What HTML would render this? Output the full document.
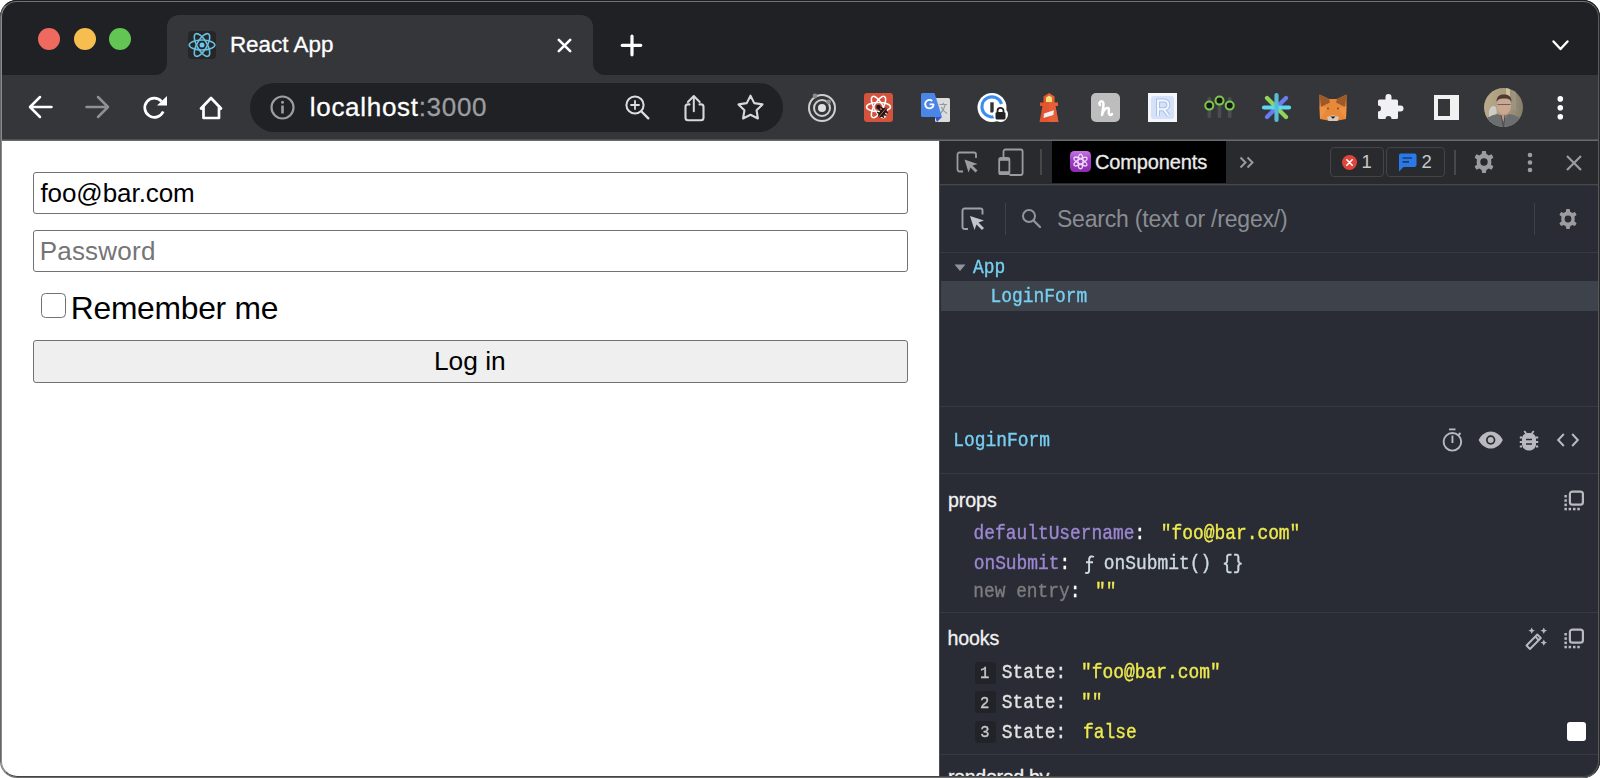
<!DOCTYPE html>
<html><head><meta charset="utf-8">
<style>
*{margin:0;padding:0;box-sizing:border-box}
html,body{width:1600px;height:778px;overflow:hidden;background:#fff;font-family:"Liberation Sans",sans-serif}
.a{position:absolute}
.t{position:absolute;white-space:pre;line-height:0}
.m{font-family:"Liberation Mono",monospace}
#win{position:absolute;left:0;top:0;width:1600px;height:778px;border-radius:17px;overflow:hidden;background:#202124;}
svg{position:absolute;overflow:visible}
</style></head><body>
<div id="win">
  <!-- tab strip -->
  <div class="a" style="left:0;top:0;width:1600px;height:75px;background:#202124"></div>
  <!-- toolbar -->
  <div class="a" style="left:0;top:75px;width:1600px;height:65px;background:#35363a"></div>
  <div class="a" style="left:0;top:139px;width:1600px;height:1px;background:#4f5053"></div><div class="a" style="left:0;top:140px;width:1600px;height:1px;background:#6a6b6e"></div>
  <!-- active tab -->
  <div class="a" style="left:167px;top:15px;width:426px;height:61px;background:#35363a;border-radius:12px 12px 0 0"></div>
  <div class="a" style="left:155px;top:63px;width:12px;height:12px;background:#35363a"></div>
  <div class="a" style="left:143px;top:51px;width:24px;height:24px;background:#202124;border-radius:0 0 12px 0"></div>
  <div class="a" style="left:593px;top:63px;width:12px;height:12px;background:#35363a"></div>
  <div class="a" style="left:593px;top:51px;width:24px;height:24px;background:#202124;border-radius:0 0 0 12px"></div>
  <div id="tabs"></div>

  <!-- traffic lights -->
  <div class="a" style="left:38px;top:28px;width:22px;height:22px;border-radius:50%;background:#ee6a5f"></div>
  <div class="a" style="left:74px;top:28px;width:22px;height:22px;border-radius:50%;background:#f5be4f"></div>
  <div class="a" style="left:109px;top:28px;width:22px;height:22px;border-radius:50%;background:#62c554"></div>

  <!-- tab favicon -->
  <div class="a" style="left:188px;top:31px;width:28px;height:28px;border-radius:4px;background:#262627"></div>
  <svg style="left:188px;top:31px" width="28" height="28" viewBox="0 0 28 28">
    <g fill="none" stroke="#68bfe0" stroke-width="1.55">
      <ellipse cx="14" cy="14" rx="12.8" ry="5"/>
      <ellipse cx="14" cy="14" rx="12.8" ry="5" transform="rotate(60 14 14)"/>
      <ellipse cx="14" cy="14" rx="12.8" ry="5" transform="rotate(120 14 14)"/>
    </g>
    <circle cx="14" cy="14" r="2.5" fill="#6cc8ec"/>
  </svg>
  <svg style="left:557px;top:38px" width="15" height="15" viewBox="0 0 15 15"><path d="M1.8 1.8L13.2 13.2M13.2 1.8L1.8 13.2" stroke="#fff" stroke-width="2.6" stroke-linecap="round"/></svg>
  <svg style="left:620px;top:34px" width="23" height="23" viewBox="0 0 23 23"><path d="M12 2.2V20.8M2.2 11.3H20.8" stroke="#fff" stroke-width="3.2" stroke-linecap="round"/></svg>
  <svg style="left:1552px;top:40px" width="17" height="11" viewBox="0 0 17 11"><path d="M1.5 1.5L8.5 9L15.5 1.5" fill="none" stroke="#fff" stroke-width="2.4" stroke-linecap="round" stroke-linejoin="round"/></svg>

  <!-- toolbar icons -->
  <svg style="left:28px;top:95px" width="25" height="24" viewBox="0 0 25 24"><path d="M23.5 12H2.5M12 2L2 12L12 22" fill="none" stroke="#fff" stroke-width="2.5" stroke-linecap="round" stroke-linejoin="round"/></svg>
  <svg style="left:85px;top:95px" width="25" height="24" viewBox="0 0 25 24"><path d="M1.5 12H22.5M13 2L23 12L13 22" fill="none" stroke="#8e9094" stroke-width="2.5" stroke-linecap="round" stroke-linejoin="round"/></svg>
  <svg style="left:142px;top:95px" width="26" height="26" viewBox="0 0 26 26">
    <path d="M21.2 16.5A9.6 9.6 0 1 1 19.5 6.3" fill="none" stroke="#fff" stroke-width="2.7"/>
    <path d="M15 10.5H25V1Z" fill="#fff"/>
  </svg>
  <svg style="left:198px;top:95px" width="26" height="26" viewBox="0 0 26 26"><path d="M3 13.5L13 3L23 13.5M5.5 11V23H21V11" fill="none" stroke="#fff" stroke-width="2.7" stroke-linecap="round" stroke-linejoin="round"/></svg>

  <!-- omnibox -->
  <div class="a" style="left:250px;top:83px;width:533px;height:49px;border-radius:25px;background:#202124"></div>
  <svg style="left:270px;top:95px" width="25" height="25" viewBox="0 0 25 25"><circle cx="12.5" cy="12.5" r="11" fill="none" stroke="#9b9da1" stroke-width="2.2"/><rect x="11.2" y="10.5" width="2.6" height="8" fill="#9b9da1"/><circle cx="12.5" cy="7.2" r="1.5" fill="#9b9da1"/></svg>
  <svg style="left:625px;top:95px" width="25" height="25" viewBox="0 0 25 25"><circle cx="10" cy="10" r="8.6" fill="none" stroke="#dedede" stroke-width="2"/><path d="M16.5 16.5L23.3 23.3" stroke="#dedede" stroke-width="2.4" stroke-linecap="round"/><path d="M10 6V14M6 10H14" stroke="#dedede" stroke-width="1.8" stroke-linecap="round"/></svg>
  <svg style="left:683px;top:94px" width="23" height="28" viewBox="0 0 23 28"><path d="M6.5 10.4H5A2.5 2.5 0 0 0 2.5 12.9V23.7A2.5 2.5 0 0 0 5 26.2H18A2.5 2.5 0 0 0 20.5 23.7V12.9A2.5 2.5 0 0 0 18 10.4H16.5" fill="none" stroke="#d8d8d8" stroke-width="2.1" stroke-linecap="round"/><path d="M10.8 17.2V2.5M4.9 8L10.8 2L16.7 8" fill="none" stroke="#d8d8d8" stroke-width="2" stroke-linecap="round" stroke-linejoin="round"/></svg>
  <svg style="left:737px;top:93px" width="27" height="27" viewBox="0 0 27 27"><path d="M13.50 2.70L17.26 10.12L25.48 11.41L19.59 17.28L20.91 25.49L13.50 21.70L6.09 25.49L7.41 17.28L1.52 11.41L9.74 10.12Z" fill="none" stroke="#d8d8d8" stroke-width="2.1" stroke-linejoin="round"/></svg>

  <div id="ext">
  <!-- 1 radar -->
  <svg style="left:807px;top:93px" width="30" height="30" viewBox="0 0 30 30">
    <circle cx="15" cy="15" r="13" fill="none" stroke="#cfcfcf" stroke-width="2"/>
    <circle cx="15" cy="15" r="8" fill="none" stroke="#cfcfcf" stroke-width="2"/>
    <circle cx="15" cy="15" r="4" fill="#e0e0e0"/>
    <circle cx="8" cy="3" r="2.4" fill="#8a8a8a"/>
    <circle cx="21.5" cy="9" r="2.4" fill="#8a8a8a"/>
  </svg>
  <!-- 2 react bug -->
  <div class="a" style="left:864px;top:93px;width:29px;height:29px;border-radius:3px;background:#d5523d"></div>
  <svg style="left:864px;top:93px" width="29" height="29" viewBox="0 0 29 29">
    <g fill="none" stroke="#fff" stroke-width="1.5">
      <ellipse cx="14.5" cy="14" rx="12" ry="4.5"/>
      <ellipse cx="14.5" cy="14" rx="12" ry="4.5" transform="rotate(60 14.5 14)"/>
      <ellipse cx="14.5" cy="14" rx="12" ry="4.5" transform="rotate(120 14.5 14)"/>
    </g>
    <circle cx="14.5" cy="14" r="3.3" fill="#d5523d"/><circle cx="14.5" cy="14" r="2.3" fill="#1a1a1a"/>
    <g transform="rotate(40 18.5 19.5)"><ellipse cx="18.5" cy="19.5" rx="2.8" ry="6" fill="#1a1a1a"/>
    <path d="M14 16.5H23M13.5 19.5H23.5M14 22.5H23" stroke="#1a1a1a" stroke-width="1.3"/>
    <path d="M18.5 13.5V25.5" stroke="#d5523d" stroke-width="0.9"/></g>
  </svg>
  <!-- 3 google translate -->
  <svg style="left:920px;top:93px" width="31" height="30" viewBox="0 0 31 30">
    <rect x="15" y="5" width="15" height="24" rx="1.5" fill="#dcdcdc"/>
    <path d="M19.5 11.5H27M23.2 9.8V11.5M20.5 20.5C23 18 24.5 15 25.2 11.5M21.2 14C23 17.5 25 19.5 27 20.5" fill="none" stroke="#8e9aa3" stroke-width="1.2"/>
    <path d="M2.5 0H14.5L22 24H2.5A1.5 1.5 0 0 1 1 22.5V1.5A1.5 1.5 0 0 1 2.5 0Z" fill="#4a86e8"/>
    <path d="M15 24H22L17 29Z" fill="#3a55c8"/>
    <path d="M13.6 11.2A4.2 4.2 0 1 1 12.2 8" fill="none" stroke="#fff" stroke-width="1.9"/>
    <path d="M9.6 11.3H13.8" stroke="#fff" stroke-width="1.7"/>
  </svg>
  <!-- 4 1password -->
  <svg style="left:977px;top:93px" width="31" height="30" viewBox="0 0 31 30">
    <circle cx="15" cy="14.5" r="14.5" fill="#fff"/>
    <path d="M22 21A10 10 0 1 1 24.5 11" fill="none" stroke="#3b8ef0" stroke-width="3"/>
    <rect x="13.3" y="9.3" width="3.4" height="10.2" fill="#333"/>
    <circle cx="23.5" cy="21.5" r="7.5" fill="#fff"/>
    <path d="M20.5 19V17.8A3 3 0 0 1 26.5 17.8V19" fill="none" stroke="#222" stroke-width="1.8"/>
    <rect x="18.5" y="19" width="10" height="7.5" rx="1.5" fill="#222"/>
  </svg>
  <!-- 5 lighthouse -->
  <svg style="left:1038px;top:93px" width="22" height="30" viewBox="0 0 22 30">
    <path d="M11 0L16.5 3.5V9.5H20V13H17.5L20.5 29H1.5L4.5 13H2V9.5H5.5V3.5Z" fill="#e4552f"/>
    <path d="M11 0L16.5 3.5V9.5H20V13H17.5L20.5 29H11Z" fill="#ea6a3f" opacity="0.5"/>
    <path d="M8 4.5L11 2.5L14 4.5V9H8Z" fill="#f2e07a"/>
    <path d="M6 20.5L16 17.2L15.3 22L5.5 25Z" fill="#f0f0f0"/>
  </svg>
  <!-- 6 h -->
  <div class="a" style="left:1091px;top:93px;width:29px;height:29px;border-radius:5px;background:#bdbdbd"></div>
  <svg style="left:1091px;top:93px" width="29" height="29" viewBox="0 0 29 29"><path d="M9 12C7.5 10.5 9.5 7.5 11.5 8.5C13.5 9.5 12 15 11 22C12.5 17 15 14.5 17 15C19 15.5 17 19 18 21C18.7 22.4 20 22 21 21" fill="none" stroke="#fff" stroke-width="2.5" stroke-linecap="round" stroke-linejoin="round"/></svg>
  <!-- 7 R -->
  <div class="a" style="left:1148px;top:93px;width:29px;height:29px;background:#f4f6fb"></div>
  <div class="a" style="left:1151px;top:96px;width:23px;height:23px;border-radius:3px;background:#d5e1f6"></div>
  <svg style="left:1148px;top:93px" width="29" height="29" viewBox="0 0 29 29"><path d="M10 23V7.5H16A4.3 4.3 0 0 1 16 16.2H10.5M15.5 16.2L20.5 22.5" fill="none" stroke="#a8c0ec" stroke-width="4"/><path d="M10 23V7.5H16A4.3 4.3 0 0 1 16 16.2H10.5M15.5 16.2L20.5 22.5" fill="none" stroke="#f4f7fc" stroke-width="2"/></svg>
  <!-- 8 sliders -->
  <svg style="left:1203px;top:93px" width="33" height="30" viewBox="0 0 33 30">
    <g fill="#4c4d50"><rect x="4.5" y="4" width="3.6" height="21" rx="1.5"/><rect x="14.7" y="4" width="3.6" height="21" rx="1.5"/><rect x="24.9" y="4" width="3.6" height="21" rx="1.5"/></g>
    <g fill="#151515" stroke="#7cc84a" stroke-width="2"><circle cx="6.3" cy="12.6" r="4"/><circle cx="16.5" cy="7.6" r="4"/><circle cx="26.7" cy="12.6" r="4"/></g>
  </svg>
  <!-- 9 asterisk -->
  <svg style="left:1261px;top:92px" width="31" height="31" viewBox="0 0 31 31">
    <g stroke-width="4.2" stroke-linecap="round">
      <path d="M6 6L25 25" stroke="#8fd65a"/>
      <path d="M25 6L6 25" stroke="#6a7cf0"/>
      <path d="M3 15.5H28" stroke="#5fd6f2"/>
      <path d="M15.5 3V28" stroke="#56bcd6"/>
    </g>
  </svg>
  <!-- 10 fox -->
  <svg style="left:1318px;top:94px" width="30" height="28" viewBox="0 0 30 28">
    <path d="M1.5 0.5L11 5H19L28.5 0.5L28.5 12L28 25L20 26.5H10L2 25L1.5 12Z" fill="#e8893a"/>
    <path d="M1.5 0.5L11 5L12 8.5L3 13Z M28.5 0.5L19 5L18 8.5L27 13Z" fill="#9c5a2a"/>
    <path d="M1.5 12L9 14L6 20L2 25Z M28.5 12L21 14L24 20L28 25Z" fill="#f09a4a" opacity="0.6"/>
    <path d="M9 23L15 21L21 23L19.5 27H10.5Z" fill="#d9c6b6"/>
    <path d="M12.5 22.5H17.5L15 24.8Z" fill="#111"/>
    <circle cx="10" cy="14.5" r="1" fill="#7a4a2a"/><circle cx="20" cy="14.5" r="1" fill="#7a4a2a"/>
  </svg>
  <!-- 11 puzzle -->
  <svg style="left:1377px;top:93px" width="28" height="28" viewBox="0 0 28 28"><path d="M2.5 6.5H8.5V4A3 3 0 0 1 14.5 4V6.5H19.5A1.5 1.5 0 0 1 21 8V12.5H23.5A3 3 0 0 1 23.5 18.5H21V24.5A1.5 1.5 0 0 1 19.5 26H14.5A3 3 0 0 0 8.5 26H2.5A1.5 1.5 0 0 1 1 24.5V18.5A3 3 0 0 0 1 12.5V8A1.5 1.5 0 0 1 2.5 6.5Z" fill="#f1f1f3"/></svg>
  <!-- 12 sidebar -->
  <div class="a" style="left:1434px;top:95px;width:25px;height:25px;background:#f1f1f1"></div>
  <div class="a" style="left:1438px;top:99px;width:12px;height:17px;background:#35363a"></div>
  <!-- avatar -->
  <svg style="left:1484px;top:87.5px;filter:blur(0.35px)" width="39" height="39" viewBox="0 0 39 39">
    <defs><clipPath id="avc"><circle cx="19.5" cy="19.5" r="19.5"/></clipPath>
    <linearGradient id="avbg" x1="0" y1="0" x2="1" y2="0"><stop offset="0" stop-color="#b9ab8c"/><stop offset="0.55" stop-color="#a99a7c"/><stop offset="1" stop-color="#857d6c"/></linearGradient></defs>
    <g clip-path="url(#avc)">
      <rect width="39" height="39" fill="url(#avbg)"/>
      <rect x="22" y="0" width="4" height="14" fill="#d6cba8" opacity="0.8"/>
      <rect x="28" y="2" width="4" height="20" fill="#9d9382"/>
      <path d="M5 24C5 20 8 18 10 18C12 18 13 21 12.5 26L11 34H5Z" fill="#d8d8dc" opacity="0.75"/>
      <path d="M0 39V33C3 29 9 27 13 26L19.5 28L26 26C31 27 36 29 39 33V39Z" fill="#6c6e70"/>
      <path d="M15 24L19.5 34L24 24Z" fill="#b99a85"/>
      <path d="M17 27L19.5 39L21 27" fill="none" stroke="#4a4c4e" stroke-width="1"/>
      <ellipse cx="20" cy="17.5" rx="7.3" ry="9" fill="#c9a791"/>
      <path d="M12.5 14C12.5 8 16 6.5 20 6.5C24 6.5 27.5 8 27.5 14C26 11 24 10.5 20 10.5C16 10.5 14 11 12.5 14Z" fill="#4e3b30"/>
      <path d="M13.5 16.5H26.5" stroke="#6a625c" stroke-width="1"/>
    </g>
  </svg>
  <svg style="left:1556px;top:95px" width="9" height="25" viewBox="0 0 9 25"><circle cx="4.3" cy="3.9" r="2.8" fill="#fff"/><circle cx="4.3" cy="12.8" r="2.8" fill="#fff"/><circle cx="4.3" cy="21.7" r="2.8" fill="#fff"/></svg>
</div>

  <!-- page content -->
  <div class="a" style="left:0;top:141px;width:939px;height:637px;background:#fff"></div>
  <div id="page">
  <div class="a" style="left:33px;top:172px;width:875px;height:42px;border:1.8px solid #727272;border-radius:3px;background:#fff"></div>
  <div class="a" style="left:33px;top:230px;width:875px;height:42px;border:1.8px solid #727272;border-radius:3px;background:#fff"></div>
  <div class="a" style="left:40.8px;top:293.2px;width:25px;height:25px;border:1.8px solid #717171;border-radius:4.5px;background:#fff"></div>
  <div class="a" style="left:33px;top:340px;width:875px;height:43px;border:1.8px solid #727272;border-radius:3px;background:#efefef"></div>
</div>

  <!-- devtools -->
  <div class="a" style="left:939px;top:141px;width:661px;height:637px;background:#292c34"></div>
  <div id="dt">
  <!-- devtools toolbar -->
  <div class="a" style="left:939px;top:141px;width:1px;height:637px;background:#4a4b4f"></div>
  <div class="a" style="left:940px;top:141px;width:660px;height:43px;background:#292a2e"></div>
  <div class="a" style="left:940px;top:184px;width:660px;height:1px;background:#45474c"></div><div class="a" style="left:940px;top:185px;width:660px;height:1px;background:#33353b"></div>
  <svg style="left:956px;top:151px" width="24" height="24" viewBox="0 0 24 24">
    <path d="M7 20.5H3.5A2 2 0 0 1 1.5 18.5V3.5A2 2 0 0 1 3.5 1.5H18A2 2 0 0 1 20 3.5V7" fill="none" stroke="#9c9c9e" stroke-width="1.8"/>
    <path d="M8.5 8.5L21.5 13L16.5 14.5L21.5 19.5L19.5 21.5L14.5 16.5L12.5 21.5Z" fill="#9c9c9e"/>
  </svg>
  <svg style="left:997px;top:148px" width="28" height="28" viewBox="0 0 28 28">
    <path d="M6.5 9V3.5A2 2 0 0 1 8.5 1.5H23.6A2 2 0 0 1 25.6 3.5V25A2 2 0 0 1 23.6 27H12.5" fill="none" stroke="#9c9c9e" stroke-width="1.8"/>
    <rect x="2.2" y="9.8" width="10.2" height="16.4" rx="1.8" fill="none" stroke="#9c9c9e" stroke-width="1.8"/>
    <rect x="2.2" y="23.2" width="10.2" height="3.5" fill="#9c9c9e"/>
    <rect x="2.2" y="9.8" width="10.2" height="3" fill="#9c9c9e"/>
  </svg>
  <div class="a" style="left:1040px;top:149px;width:2px;height:26px;background:#48484b"></div>
  <div class="a" style="left:1052px;top:141px;width:174px;height:42px;background:#000"></div>
  <div class="a" style="left:1070px;top:151px;width:21px;height:21px;border-radius:4.5px;background:linear-gradient(#c878e4,#a040c8 40%,#8a2cae)"></div>
  <svg style="left:1070px;top:151px" width="21" height="21" viewBox="0 0 21 21">
    <g fill="none" stroke="#eedcf6" stroke-width="1.35">
      <ellipse cx="10.5" cy="10.5" rx="2.5" ry="7.4"/>
      <ellipse cx="10.5" cy="10.5" rx="2.5" ry="7.4" transform="rotate(60 10.5 10.5)"/>
      <ellipse cx="10.5" cy="10.5" rx="2.5" ry="7.4" transform="rotate(120 10.5 10.5)"/>
    </g><circle cx="10.5" cy="10.5" r="1.7" fill="#a040c8"/>
  </svg>
  <svg style="left:1239px;top:156px" width="16" height="13" viewBox="0 0 16 13"><path d="M1.5 1.5L6.5 6.5L1.5 11.5M8.5 1.5L13.5 6.5L8.5 11.5" fill="none" stroke="#9a9a9c" stroke-width="2"/></svg>

  <div class="a" style="left:1330px;top:147px;width:54px;height:30px;border:1px solid #444448;border-radius:4px"></div>
  <svg style="left:1342px;top:154.5px" width="15" height="15" viewBox="0 0 15 15"><circle cx="7.5" cy="7.5" r="7.5" fill="#e0453c"/><path d="M4.8 4.8L10.2 10.2M10.2 4.8L4.8 10.2" stroke="#fff" stroke-width="1.6" stroke-linecap="round"/></svg>
  <div class="a" style="left:1386px;top:147px;width:59px;height:30px;border:1px solid #444448;border-radius:4px"></div>
  <svg style="left:1398px;top:153px" width="19" height="19" viewBox="0 0 19 19"><path d="M2.5 0.5H16.5A2 2 0 0 1 18.5 2.5V12A2 2 0 0 1 16.5 14H5.5L1 18.5V2.5A2 2 0 0 1 2.5 0.5Z" fill="#2b79e6"/><path d="M4.5 5H14M4.5 8.8H11" stroke="#1a3d6e" stroke-width="1.7"/></svg>
  <div class="a" style="left:1454px;top:150px;width:2px;height:25px;background:#48484b"></div>
  <svg style="left:1472px;top:150px" width="24" height="24" viewBox="0 0 24 24"><path id="gearp" fill="#9c9c9e" fill-rule="evenodd" d="M10.2 1H13.8L14.4 4.1A8.2 8.2 0 0 1 16.6 5.4L19.6 4.3L21.4 7.4L19 9.5A8.2 8.2 0 0 1 19 14.5L21.4 16.6L19.6 19.7L16.6 18.6A8.2 8.2 0 0 1 14.4 19.9L13.8 23H10.2L9.6 19.9A8.2 8.2 0 0 1 7.4 18.6L4.4 19.7L2.6 16.6L5 14.5A8.2 8.2 0 0 1 5 9.5L2.6 7.4L4.4 4.3L7.4 5.4A8.2 8.2 0 0 1 9.6 4.1ZM12 8.3A3.7 3.7 0 1 0 12 15.7A3.7 3.7 0 1 0 12 8.3Z"/></svg>
  <svg style="left:1525px;top:152px" width="10" height="21" viewBox="0 0 10 21"><circle cx="5" cy="3" r="2.3" fill="#9c9c9e"/><circle cx="5" cy="10.5" r="2.3" fill="#9c9c9e"/><circle cx="5" cy="18" r="2.3" fill="#9c9c9e"/></svg>
  <svg style="left:1565px;top:154px" width="18" height="18" viewBox="0 0 18 18"><path d="M2 2L16 16M16 2L2 16" stroke="#9c9c9e" stroke-width="2.2"/></svg>

  <!-- search row -->
  <svg style="left:961px;top:207px" width="25" height="25" viewBox="0 0 25 25">
    <path d="M7 22H3.5A2 2 0 0 1 1.5 20V3.5A2 2 0 0 1 3.5 1.5H19.5A2 2 0 0 1 21.5 3.5V7.5" fill="none" stroke="#9da1a7" stroke-width="1.9"/>
    <path d="M9 9L23 13.5L17.5 15.5L23 21L21 23L15.5 17.5L13.5 23Z" fill="#c2c5ca"/>
  </svg>
  <div class="a" style="left:1005px;top:203px;width:1px;height:32px;background:#3d424a"></div>
  <svg style="left:1021px;top:208px" width="21" height="21" viewBox="0 0 21 21"><circle cx="8" cy="8" r="6" fill="none" stroke="#8f949d" stroke-width="2"/><path d="M12.5 12.5L19 19" stroke="#8f949d" stroke-width="2.4" stroke-linecap="round"/></svg>
  <div class="a" style="left:1534px;top:203px;width:1px;height:32px;background:#3d424a"></div>
  <svg style="left:1557px;top:208px" width="22" height="22" viewBox="0 0 24 24"><use href="#gearp" fill="#b3b6bb"/></svg>
  <div class="a" style="left:940px;top:252px;width:660px;height:1px;background:#363941"></div>

  <!-- tree -->
  <svg style="left:954px;top:264px" width="12" height="8" viewBox="0 0 12 8"><path d="M0.5 0.5H11.5L6 7Z" fill="#8f949d"/></svg>
  <div class="a" style="left:941px;top:281px;width:657px;height:30px;background:#3e424a"></div>

  <div class="a" style="left:940px;top:406px;width:660px;height:1px;background:#363941"></div>
  <div id="hdricons">
  <svg style="left:1440px;top:426px" width="24" height="26" viewBox="0 0 24 26">
    <circle cx="12.4" cy="15.8" r="8.8" fill="none" stroke="#b8bac0" stroke-width="1.9"/>
    <rect x="9" y="2.5" width="6.5" height="1.8" fill="#b8bac0"/>
    <rect x="11.5" y="9.5" width="1.9" height="7.5" fill="#b8bac0"/>
    <path d="M18.5 9L20.5 7" stroke="#b8bac0" stroke-width="1.9"/>
  </svg>
  <svg style="left:1478px;top:431px" width="26" height="19" viewBox="0 0 26 19">
    <path d="M0.6 9C3.5 3.5 8 0.6 12.7 0.6S22 3.5 24.8 9C22 14.5 17.5 17.6 12.7 17.6S3.5 14.5 0.6 9Z" fill="#b8bac0"/>
    <circle cx="12.7" cy="9" r="4.7" fill="#282c34"/>
    <circle cx="12.7" cy="9" r="3" fill="#b8bac0"/>
  </svg>
  <svg style="left:1519px;top:430px" width="20" height="21" viewBox="0 0 20 21">
    <path d="M5.3 1L7.3 3.8M14.7 1L12.7 3.8" stroke="#b8bac0" stroke-width="1.8"/>
    <path d="M3 8.5C3 5 6 3 10 3S17 5 17 8.5V14C17 18 14 20.5 10 20.5S3 18 3 14Z" fill="#b8bac0"/>
    <path d="M0.8 7.5H3M17 7.5H19.2M0.8 12H3M17 12H19.2M0.8 16.5H3M17 16.5H19.2" stroke="#b8bac0" stroke-width="1.8"/>
    <path d="M7 9.5H13M7 14H13" stroke="#282c34" stroke-width="1.6"/>
  </svg>
  <svg style="left:1556px;top:432px" width="24" height="16" viewBox="0 0 24 16">
    <path d="M7.8 2L2.2 8L7.8 14M16.2 2L21.8 8L16.2 14" fill="none" stroke="#b8bac0" stroke-width="2"/>
  </svg>
</div>
  <div class="a" style="left:940px;top:473px;width:660px;height:1px;background:#363941"></div>

  <!-- props -->
  <svg style="left:1564px;top:489px" width="21" height="22" viewBox="0 0 21 22">
    <rect x="5.9" y="2.6" width="13" height="13.1" rx="2.5" fill="none" stroke="#b8bac0" stroke-width="2.2"/>
    <g fill="#b8bac0"><rect x="0.4" y="6" width="2.5" height="2.5"/><rect x="0.4" y="10.3" width="2.5" height="2.5"/><rect x="0.4" y="14.6" width="2.5" height="2.5"/><rect x="0.4" y="18.8" width="2.5" height="2.5"/><rect x="4.6" y="18.8" width="2.5" height="2.5"/><rect x="9" y="18.8" width="2.5" height="2.5"/><rect x="13.3" y="18.8" width="2.5" height="2.5"/></g>
  </svg>
  <div class="a" style="left:940px;top:612px;width:660px;height:1px;background:#363941"></div>

  <!-- hooks -->
  <svg style="left:1524px;top:627px" width="24" height="24" viewBox="0 0 24 24">
    <path d="M2.5 18.5L13.3 7.5L16.8 11L6 22Z" fill="none" stroke="#b8bac0" stroke-width="1.9" stroke-linejoin="round"/>
    <path d="M11.3 9.6L14.7 13" stroke="#b8bac0" stroke-width="1.9"/>
    <g fill="#b8bac0">
      <path d="M7.7 0.5L8.8 2.8L11 3.7L8.8 4.6L7.7 7L6.6 4.6L4.3 3.7L6.6 2.8Z"/>
      <path d="M19.8 0.5L20.9 2.8L23.1 3.7L20.9 4.6L19.8 7L18.7 4.6L16.4 3.7L18.7 2.8Z"/>
      <path d="M19.8 12.5L20.9 14.8L23.1 15.7L20.9 16.6L19.8 19L18.7 16.6L16.4 15.7L18.7 14.8Z"/>
    </g>
  </svg>
  <svg style="left:1564px;top:627px" width="21" height="22" viewBox="0 0 21 22">
    <rect x="5.9" y="2.6" width="13" height="13.1" rx="2.5" fill="none" stroke="#b8bac0" stroke-width="2.2"/>
    <g fill="#b8bac0"><rect x="0.4" y="6" width="2.5" height="2.5"/><rect x="0.4" y="10.3" width="2.5" height="2.5"/><rect x="0.4" y="14.6" width="2.5" height="2.5"/><rect x="0.4" y="18.8" width="2.5" height="2.5"/><rect x="4.6" y="18.8" width="2.5" height="2.5"/><rect x="9" y="18.8" width="2.5" height="2.5"/><rect x="13.3" y="18.8" width="2.5" height="2.5"/></g>
  </svg>
  <div class="a" style="left:975px;top:662px;width:21px;height:22px;border-radius:3px;background:#202328"></div>
  <div class="a" style="left:975px;top:691px;width:21px;height:22px;border-radius:3px;background:#202328"></div>
  <div class="a" style="left:975px;top:721px;width:21px;height:22px;border-radius:3px;background:#202328"></div>
  <div class="a" style="left:1567px;top:722px;width:19px;height:19px;border-radius:3px;background:#fff"></div>
  <div class="a" style="left:940px;top:754px;width:660px;height:1px;background:#363941"></div>
  <div id="rticons"></div>
</div>

<div class="t" style="left:229.91px;top:44.64px;font-size:22.4px;color:#fff;font-family:'Liberation Sans',sans-serif;letter-spacing:0.023px;-webkit-text-stroke:0.3px currentColor;">React App</div>
<div class="t" style="left:309.75px;top:107.39px;font-size:26px;color:#fff;font-family:'Liberation Sans',sans-serif;letter-spacing:0.699px;-webkit-text-stroke:0.3px currentColor;">localhost<span style="color:#9b9da1">:3000</span></div>
<div class="t" style="left:40.43px;top:193.39px;font-size:26px;color:#000;font-family:'Liberation Sans',sans-serif;letter-spacing:-0.068px;">foo@bar.com</div>
<div class="t" style="left:39.67px;top:250.59px;font-size:26px;color:#757575;font-family:'Liberation Sans',sans-serif;letter-spacing:0.222px;">Password</div>
<div class="t" style="left:70.79px;top:307.88px;font-size:31.8px;color:#000;font-family:'Liberation Sans',sans-serif;letter-spacing:-0.267px;">Remember me</div>
<div class="t" style="left:433.94px;top:361.19px;font-size:26.3px;color:#000;font-family:'Liberation Sans',sans-serif;letter-spacing:0.022px;">Log in</div>
<div class="t" style="left:1094.98px;top:161.57px;font-size:20px;color:#ececec;font-family:'Liberation Sans',sans-serif;letter-spacing:-0.129px;-webkit-text-stroke:0.3px currentColor;">Components</div>
<div class="t" style="left:1361.59px;top:161.89px;font-size:18.5px;color:#c8c8ca;font-family:'Liberation Sans',sans-serif;">1</div>
<div class="t" style="left:1421.47px;top:161.89px;font-size:18.5px;color:#c8c8ca;font-family:'Liberation Sans',sans-serif;">2</div>
<div class="t" style="left:1056.96px;top:218.63px;font-size:23px;color:#8a8d93;font-family:'Liberation Sans',sans-serif;letter-spacing:-0.195px;">Search (text or /regex/)</div>
<div class="t" style="left:973.00px;top:267.84px;font-size:17.9px;color:#76cff2;font-family:'Liberation Mono',monospace;transform:scaleY(1.13);transform-origin:0 4.76px;-webkit-text-stroke:0.35px currentColor;">App</div>
<div class="t" style="left:990.53px;top:296.94px;font-size:17.9px;color:#76cff2;font-family:'Liberation Mono',monospace;transform:scaleY(1.13);transform-origin:0 4.76px;-webkit-text-stroke:0.35px currentColor;">LoginForm</div>
<div class="t" style="left:953.33px;top:441.14px;font-size:17.9px;color:#76cff2;font-family:'Liberation Mono',monospace;transform:scaleY(1.13);transform-origin:0 4.76px;-webkit-text-stroke:0.35px currentColor;">LoginForm</div>
<div class="t" style="left:947.94px;top:499.91px;font-size:19.6px;color:#f2f2f2;font-family:'Liberation Sans',sans-serif;letter-spacing:-0.064px;-webkit-text-stroke:0.3px currentColor;">props</div>
<div class="t" style="left:973.49px;top:534.34px;font-size:17.9px;color:#9d87d2;font-family:'Liberation Mono',monospace;transform:scaleY(1.13);transform-origin:0 4.76px;-webkit-text-stroke:0.35px currentColor;">defaultUsername<span style="color:#fff">:</span></div>
<div class="t" style="left:1160.78px;top:534.34px;font-size:17.9px;color:#eeea4f;font-family:'Liberation Mono',monospace;transform:scaleY(1.13);transform-origin:0 4.76px;-webkit-text-stroke:0.35px currentColor;">"foo@bar.com"</div>
<div class="t" style="left:973.66px;top:563.74px;font-size:17.9px;color:#9d87d2;font-family:'Liberation Mono',monospace;transform:scaleY(1.13);transform-origin:0 4.76px;-webkit-text-stroke:0.35px currentColor;">onSubmit<span style="color:#fff">:</span></div>
<svg style="left:1084px;top:555px" width="11" height="19" viewBox="0 0 11 19"><path d="M9.8 2.2C9 1.4 8 1.2 7 1.5C5.6 2 5.1 3.3 5.1 5V15.5C5.1 17.2 4.4 18 3 18C2.2 18 1.6 17.8 1.2 17.5M2 7.2H9" fill="none" stroke="#cedae0" stroke-width="1.9"/></svg>
<div class="t" style="left:1103.86px;top:563.74px;font-size:17.9px;color:#cedae0;font-family:'Liberation Mono',monospace;transform:scaleY(1.13);transform-origin:0 4.76px;-webkit-text-stroke:0.35px currentColor;">onSubmit() {}</div>
<div class="t" style="left:973.19px;top:592.24px;font-size:17.9px;color:#7c7c7e;font-family:'Liberation Mono',monospace;transform:scaleY(1.13);transform-origin:0 4.76px;-webkit-text-stroke:0.35px currentColor;">new entry<span style="color:#fff">:</span></div>
<div class="t" style="left:1095.08px;top:592.24px;font-size:17.9px;color:#eeea4f;font-family:'Liberation Mono',monospace;transform:scaleY(1.13);transform-origin:0 4.76px;-webkit-text-stroke:0.35px currentColor;">""</div>
<div class="t" style="left:947.44px;top:638.21px;font-size:19.6px;color:#f2f2f2;font-family:'Liberation Sans',sans-serif;letter-spacing:-0.109px;-webkit-text-stroke:0.3px currentColor;">hooks</div>
<div class="t" style="left:980.08px;top:674.08px;font-size:15.5px;color:#c8c8c8;font-family:'Liberation Mono',monospace;transform:scaleY(1.1);transform-origin:0 4.12px;-webkit-text-stroke:0.35px currentColor;">1</div>
<div class="t" style="left:1001.71px;top:673.44px;font-size:17.9px;color:#e3e3e3;font-family:'Liberation Mono',monospace;transform:scaleY(1.13);transform-origin:0 4.76px;-webkit-text-stroke:0.35px currentColor;">State:</div>
<div class="t" style="left:980.11px;top:703.58px;font-size:15.5px;color:#c8c8c8;font-family:'Liberation Mono',monospace;transform:scaleY(1.1);transform-origin:0 4.12px;-webkit-text-stroke:0.35px currentColor;">2</div>
<div class="t" style="left:1001.71px;top:703.34px;font-size:17.9px;color:#e3e3e3;font-family:'Liberation Mono',monospace;transform:scaleY(1.13);transform-origin:0 4.76px;-webkit-text-stroke:0.35px currentColor;">State:</div>
<div class="t" style="left:980.23px;top:733.28px;font-size:15.5px;color:#c8c8c8;font-family:'Liberation Mono',monospace;transform:scaleY(1.1);transform-origin:0 4.12px;-webkit-text-stroke:0.35px currentColor;">3</div>
<div class="t" style="left:1001.71px;top:733.04px;font-size:17.9px;color:#e3e3e3;font-family:'Liberation Mono',monospace;transform:scaleY(1.13);transform-origin:0 4.76px;-webkit-text-stroke:0.35px currentColor;">State:</div>
<div class="t" style="left:1081.08px;top:673.44px;font-size:17.9px;color:#eeea4f;font-family:'Liberation Mono',monospace;transform:scaleY(1.13);transform-origin:0 4.76px;-webkit-text-stroke:0.35px currentColor;">"foo@bar.com"</div>
<div class="t" style="left:1081.08px;top:703.34px;font-size:17.9px;color:#eeea4f;font-family:'Liberation Mono',monospace;transform:scaleY(1.13);transform-origin:0 4.76px;-webkit-text-stroke:0.35px currentColor;">""</div>
<div class="t" style="left:1083.04px;top:733.04px;font-size:17.9px;color:#eeea4f;font-family:'Liberation Mono',monospace;transform:scaleY(1.13);transform-origin:0 4.76px;-webkit-text-stroke:0.35px currentColor;">false</div>
<div class="t" style="left:947.90px;top:776.61px;font-size:19.6px;color:#f2f2f2;font-family:'Liberation Sans',sans-serif;letter-spacing:-0.306px;-webkit-text-stroke:0.3px currentColor;">rendered by</div>
  <!-- window borders -->
  <div class="a" style="left:0;top:0;width:1600px;height:778px;border-radius:17px;border-style:solid;border-width:1px;border-color:#1e1e1e #2a2a2a #6e6e6e #666"></div>
  <div class="a" style="left:1px;top:1px;width:1598px;height:776px;border-radius:16px;border-style:solid;border-width:1px;border-color:#737373 #58595d #444 #8a8a8a"></div>
</div>
</body></html>
